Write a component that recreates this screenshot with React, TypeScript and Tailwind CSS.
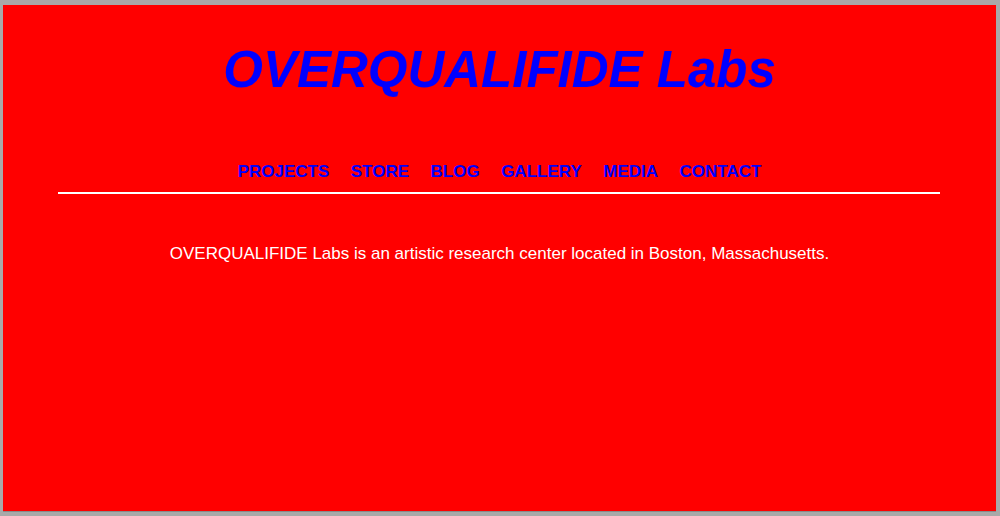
const links = ['PROJECTS', 'STORE', 'BLOG', 'GALLERY', 'MEDIA', 'CONTACT'];

export default function App() {
  return (
    <div className="flex h-[516px] w-[1000px] flex-col bg-[#a9a9a9] pt-[5px] pr-[4px] pb-[4px] pl-[3px] font-['Liberation_Sans',Arial,sans-serif]">
      <div className="flex flex-1 flex-col items-center border-b border-[#8a8a8a] bg-[#ff0000]">
        <h1 className="mt-[39px] text-[51px] leading-none font-bold italic text-[#0000ff]">
          OVERQUALIFIDE Labs
        </h1>
        <nav className="mt-[68px] flex gap-[21.5px] text-[17px] leading-none font-bold text-[#0000ff]">
          {links.map((l) => (
            <a key={l} href="#">
              {l}
            </a>
          ))}
        </nav>
        <div className="mt-[12px] ml-[-1px] h-[2px] w-[882px] bg-white" />
        <p className="mt-[51px] text-[17px] leading-none text-white">
          OVERQUALIFIDE Labs is an artistic research center located in Boston, Massachusetts.
        </p>
      </div>
    </div>
  );
}
